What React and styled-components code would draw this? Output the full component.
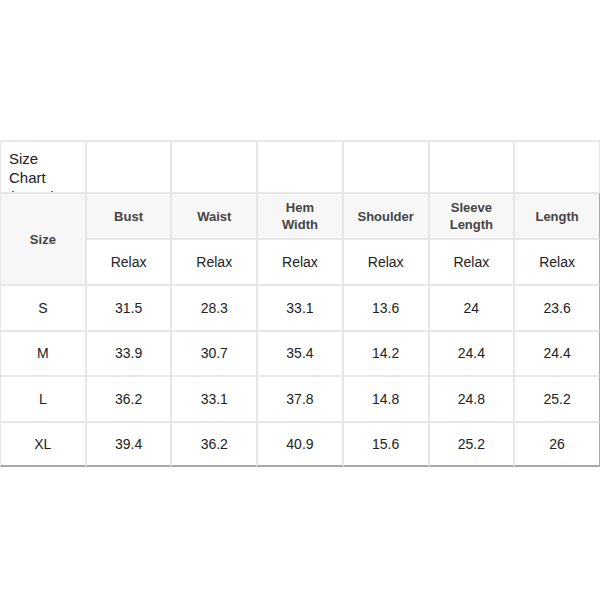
import React from "react";
import styled, { createGlobalStyle } from "styled-components";

const Global = createGlobalStyle`
  html, body { margin: 0; padding: 0; background: #fff; }
  body { font-family: "Liberation Sans", Arial, sans-serif; }
`;

const Page = styled.div`
  width: 600px;
  height: 600px;
  padding-top: 140px;
  box-sizing: border-box;
`;

const Table = styled.table`
  width: 600px;
  table-layout: fixed;
  border-collapse: separate;
  border-spacing: 0;
  border-top: 1px solid #ececec;
`;

const Row = styled.tr`
  height: ${(p) => p.$h}px;
`;

const Cell = styled.td`
  box-sizing: border-box;
  border: 1px solid #e6e6e6;
  border-right-color: ${(p) => (p.$edge ? "#a8a8a8" : "#e6e6e6")};
  border-bottom: ${(p) => (p.$last ? "2px solid #a8a8a8" : "1px solid #e6e6e6")};
  padding: 0 10px;
  text-align: center;
  vertical-align: middle;
  font-size: 14px;
  color: #222;
  background: ${(p) => (p.$head ? "#f7f7f7" : "#fff")};
  font-weight: ${(p) => (p.$head ? 700 : 400)};
  ${(p) => p.$head && "font-size: 13px; color: #444; line-height: 17px;"}
`;

const TitleCell = styled.td`
  box-sizing: border-box;
  border: 1px solid #e6e6e6;
  padding: 0;
  vertical-align: top;
`;

const Title = styled.div`
  height: 50px;
  overflow: hidden;
  padding: 7px 8px 0 8px;
  box-sizing: border-box;
  font-size: 15px;
  line-height: 19px;
  color: #222;
  text-align: left;
`;

const headers = ["Bust", "Waist", "Hem Width", "Shoulder", "Sleeve Length", "Length"];
const data = [
  ["S", "31.5", "28.3", "33.1", "13.6", "24", "23.6"],
  ["M", "33.9", "30.7", "35.4", "14.2", "24.4", "24.4"],
  ["L", "36.2", "33.1", "37.8", "14.8", "24.8", "25.2"],
  ["XL", "39.4", "36.2", "40.9", "15.6", "25.2", "26"],
];

export default function App() {
  return (
    <Page>
      <Global />
      <Table>
        <tbody>
          <Row $h={52}>
            <TitleCell>
              <Title>Size Chart (INCH)</Title>
            </TitleCell>
            {headers.map((h, i) => (
              <TitleCell key={i} />
            ))}
          </Row>
          <Row $h={46}>
            <Cell $head rowSpan={2}>Size</Cell>
            {headers.map((h, i) => (
              <Cell $head key={h} $edge={i === headers.length - 1}>
                {h}
              </Cell>
            ))}
          </Row>
          <Row $h={46}>
            {headers.map((h, i) => (
              <Cell key={h} $edge={i === headers.length - 1}>
                Relax
              </Cell>
            ))}
          </Row>
          {data.map((r, ri) => (
            <Row $h={45.5} key={r[0]}>
              {r.map((v, i) => (
                <Cell key={i} $edge={i === r.length - 1} $last={ri === data.length - 1}>
                  {v}
                </Cell>
              ))}
            </Row>
          ))}
        </tbody>
      </Table>
    </Page>
  );
}
